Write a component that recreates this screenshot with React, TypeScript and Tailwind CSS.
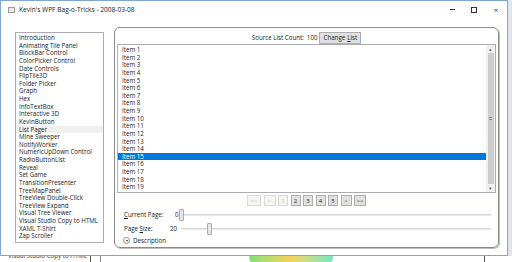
import React from "react";

const demos = [
  "Introduction",
  "Animating Tile Panel",
  "BlockBar Control",
  "ColorPicker Control",
  "Date Controls",
  "FlipTile3D",
  "Folder Picker",
  "Graph",
  "Hex",
  "InfoTextBox",
  "Interactive 3D",
  "KevinButton",
  "List Pager",
  "Mine Sweeper",
  "NotifyWorker",
  "NumericUpDown Control",
  "RadioButtonList",
  "Reveal",
  "Set Game",
  "TransitionPresenter",
  "TreeMapPanel",
  "TreeView Double-Click",
  "TreeView Expand",
  "Visual Tree Viewer",
  "Visual Studio Copy to HTML",
  "XAML T-Shirt",
  "Zap Scroller",
];

const items = Array.from({ length: 20 }, (_, i) => `Item ${i + 1}`);

const pager = [
  { label: "<<", w: "w-[14px]", off: true },
  { label: "<", w: "w-[12px]", off: true },
  { label: "1", w: "w-[10px]", off: true },
  { label: "2", w: "w-[10px]", off: false },
  { label: "3", w: "w-[10px]", off: false },
  { label: "4", w: "w-[10px]", off: false },
  { label: "5", w: "w-[10px]", off: false },
  { label: ">", w: "w-[11px]", off: false },
  { label: ">>", w: "w-[12px]", off: false },
];

// thin WPF-style slider, thumb is the only overlay
const Slider = ({ thumbAt }: { thumbAt: number }) => (
  <div className="relative flex-1 h-[12px] flex items-center">
    <div className="w-full h-[2px] border-t border-[#d6d6d6] bg-[#e7eaea]" />
    <div
      className="absolute top-0 w-[5px] h-[12px] rounded-[1px] border border-[#acacac] bg-[#e5e5e5]"
      style={{ left: thumbAt }}
    />
  </div>
);

export default function App() {
  return (
    <div
      className="w-[512px] h-[262px] overflow-hidden bg-[#dfe6ee] text-[#1a1a1a]"
      style={{ fontFamily: '"Open Sans", "Noto Sans", sans-serif' }}
    >
      {/* WINDOW */}
      <div className="w-[508px] h-[256px] border border-[#7fa6cf] bg-white flex flex-col">
        {/* TITLE BAR */}
        <div className="h-[17px] flex items-center pl-[7px] text-[6.6px]">
          <div className="w-[7px] h-[6px] border border-[#9a9a9a] bg-[#e9e9e9] mr-[4px]" />
          <span className="text-[#222]">Kevin's WPF Bag-o-Tricks - 2008-03-08</span>
          <div className="ml-auto flex items-center text-[#333]">
            <span className="w-[22px] flex justify-center">
              <span className="w-[5px] h-px bg-[#333]" />
            </span>
            <span className="w-[22px] flex justify-center">
              <span className="w-[6px] h-[6px] border border-[#333]" />
            </span>
            <span className="w-[22px] flex justify-center text-[8px] leading-none">×</span>
          </div>
        </div>

        {/* CLIENT */}
        <div className="flex-1 flex text-[6.2px] leading-[7.62px]">
          {/* DEMO LIST */}
          <div className="ml-[14px] mt-[14px] w-[89px] h-[211px] border border-[#abadb3] pt-[1px] overflow-hidden">
            {demos.map((d) => (
              <div
                key={d}
                className={`pl-[3px] whitespace-nowrap ${d === "List Pager" ? "bg-[#f0f0f0]" : ""}`}
              >
                {d}
              </div>
            ))}
          </div>

          {/* MAIN PANEL */}
          <div className="ml-[10px] mt-[9px] w-[385px] h-[221px] rounded-[6px] border border-[#8a8a8a] shadow-[1px_1px_0_#bdbdbd] flex flex-col px-[2px]">
            {/* SOURCE COUNT */}
            <div className="h-[16px] flex items-center justify-center pt-[3px]">
              <span>Source List Count:</span>
              <span className="ml-[3px]">100</span>
              <span className="ml-[2px] h-[12px] px-[3px] flex items-center border border-[#adadad] bg-[#e1e1e1]">
                Change <span className="ml-[2px] underline">L</span>ist
              </span>
            </div>

            {/* ITEM LIST */}
            <div className="h-[149px] border border-[#abadb3] flex overflow-hidden">
              <div className="flex-1 pt-[1px] overflow-hidden">
                {items.map((it) => (
                  <div
                    key={it}
                    className={`pl-[4px] ${it === "Item 15" ? "bg-[#0078d7] text-white" : ""}`}
                  >
                    {it}
                  </div>
                ))}
              </div>
              <div className="w-[9px] bg-[#f0f0f0] flex flex-col items-center">
                <span className="h-[8px] text-[5px] leading-[8px] text-[#606060]">▴</span>
                <div className="w-[6px] flex-1 bg-[#cdcdcd] flex items-center justify-center">
                  <span className="w-[3px] h-[3px] border-y border-[#888]" />
                </div>
                <span className="h-[8px] text-[5px] leading-[8px] text-[#606060]">▾</span>
              </div>
            </div>

            {/* PAGER */}
            <div className="mt-px h-[13px] flex items-center justify-center gap-[2.5px] text-[6px]">
              {pager.map((p) => (
                <span
                  key={p.label + p.w}
                  className={`${p.w} h-[11px] flex items-center justify-center leading-none border ${
                    p.off
                      ? "border-[#d9d9d9] bg-[#f4f4f4] text-[#b5b5b5]"
                      : "border-[#adadad] bg-[#e1e1e1] text-[#222]"
                  }`}
                >
                  {p.label}
                </span>
              ))}
            </div>

            {/* CURRENT PAGE */}
            <div className="mt-[1px] h-[13px] flex items-center pl-[7px] pr-[5px]">
              <span className="w-[51px]">
                <span className="underline">C</span>urrent Page:
              </span>
              <span className="w-[6px]">0</span>
              <Slider thumbAt={-2} />
            </div>

            {/* PAGE SIZE */}
            <div className="mt-[1px] h-[13px] flex items-center pl-[7px] pr-[5px]">
              <span className="w-[46px]">
                Page <span className="underline">S</span>ize:
              </span>
              <span className="w-[11px]">20</span>
              <Slider thumbAt={26} />
            </div>

            {/* DESCRIPTION */}
            <div className="mt-[2px] flex items-center pl-[6px]">
              <span className="w-[7px] h-[7px] rounded-full border border-[#8a8a8a] flex items-center justify-center text-[4px] leading-none text-[#333] mr-[3px]">
                ▾
              </span>
              <span>Description</span>
            </div>
          </div>
        </div>
      </div>

      {/* WHAT SHOWS BELOW THE WINDOW */}
      <div className="h-[6px] w-[512px] bg-white flex overflow-hidden text-[6.2px] leading-[7.62px]">
        <div className="w-[90px] pl-[8px] -mt-[4px] text-[#333] whitespace-nowrap overflow-hidden">
          Visual Studio Copy to HTML
        </div>
        <div className="w-px bg-[#555]" />
        <div className="w-[9px]" />
        <div className="w-px bg-[#888]" />
        <div className="w-[148px]" />
        <div className="w-[84px] h-[12px] rounded-b-full bg-gradient-to-r from-[#7fe07a] via-[#f2d35a] to-[#6ee8c2]" />
        <div className="w-[151px]" />
        <div className="w-px bg-[#555]" />
      </div>
    </div>
  );
}
